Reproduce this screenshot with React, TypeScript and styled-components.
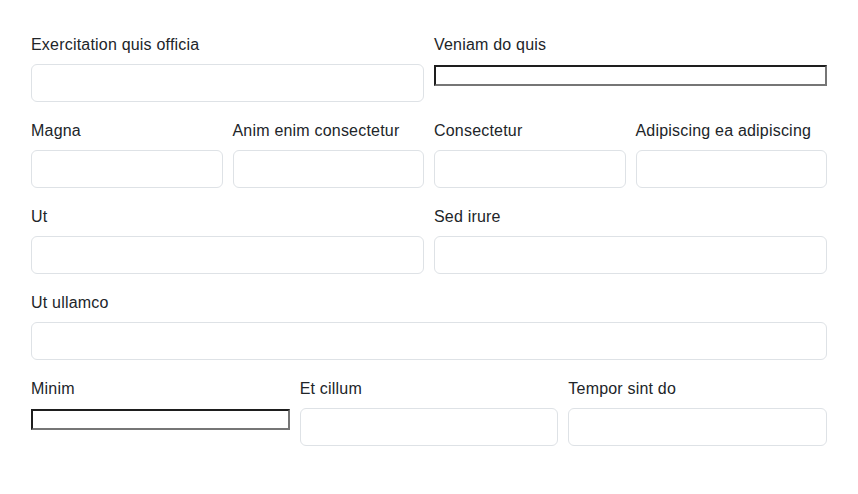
import React from 'react'
import styled, { createGlobalStyle } from 'styled-components'

const GlobalStyle = createGlobalStyle`
  body {
    margin: 0;
    background: #fff;
    font-family: "Liberation Sans", Arial, sans-serif;
    color: #212529;
  }
`

const Form = styled.form`
  padding: 32px 31px;
  display: flex;
  flex-direction: column;
  gap: 16px;
`

const Row = styled.div<{ cols: number }>`
  display: grid;
  grid-template-columns: repeat(${(p) => p.cols}, 1fr);
  column-gap: 10px;
`

const Field = styled.div`
  display: flex;
  flex-direction: column;
  min-width: 0;
`

const Label = styled.label`
  font-size: 16px;
  line-height: 24px;
  letter-spacing: 0.2px;
  padding-top: 1px;
  margin-bottom: 7px;
  white-space: nowrap;
`

const Control = styled.input`
  display: block;
  box-sizing: border-box;
  width: 100%;
  height: 38px;
  padding: 6px 12px;
  font: inherit;
  color: #212529;
  background: #fff;
  border: 1px solid #dee2e6;
  border-radius: 6px;
  outline: none;
`

// plain browser-looking input, no form-control class
const RawInput = styled.input`
  display: block;
  box-sizing: border-box;
  width: 100%;
  height: 21px;
  margin: 1px 0 0;
  padding: 1px 2px;
  background: #fff;
  border-style: solid;
  border-width: 2px;
  border-color: #1e1e1e #767676 #767676 #1e1e1e;
  outline: none;
`

type F = { label: string; raw?: boolean }

const rows: F[][] = [
  [{ label: 'Exercitation quis officia' }, { label: 'Veniam do quis', raw: true }],
  [
    { label: 'Magna' },
    { label: 'Anim enim consectetur' },
    { label: 'Consectetur' },
    { label: 'Adipiscing ea adipiscing' },
  ],
  [{ label: 'Ut' }, { label: 'Sed irure' }],
  [{ label: 'Ut ullamco' }],
  [{ label: 'Minim', raw: true }, { label: 'Et cillum' }, { label: 'Tempor sint do' }],
]

export default function App() {
  return (
    <>
      <GlobalStyle />
      <Form onSubmit={(e) => e.preventDefault()}>
        {rows.map((row, i) => (
          <Row key={i} cols={row.length}>
            {row.map((f) => (
              <Field key={f.label}>
                <Label>{f.label}</Label>
                {f.raw ? <RawInput type="text" /> : <Control type="text" />}
              </Field>
            ))}
          </Row>
        ))}
      </Form>
    </>
  )
}
